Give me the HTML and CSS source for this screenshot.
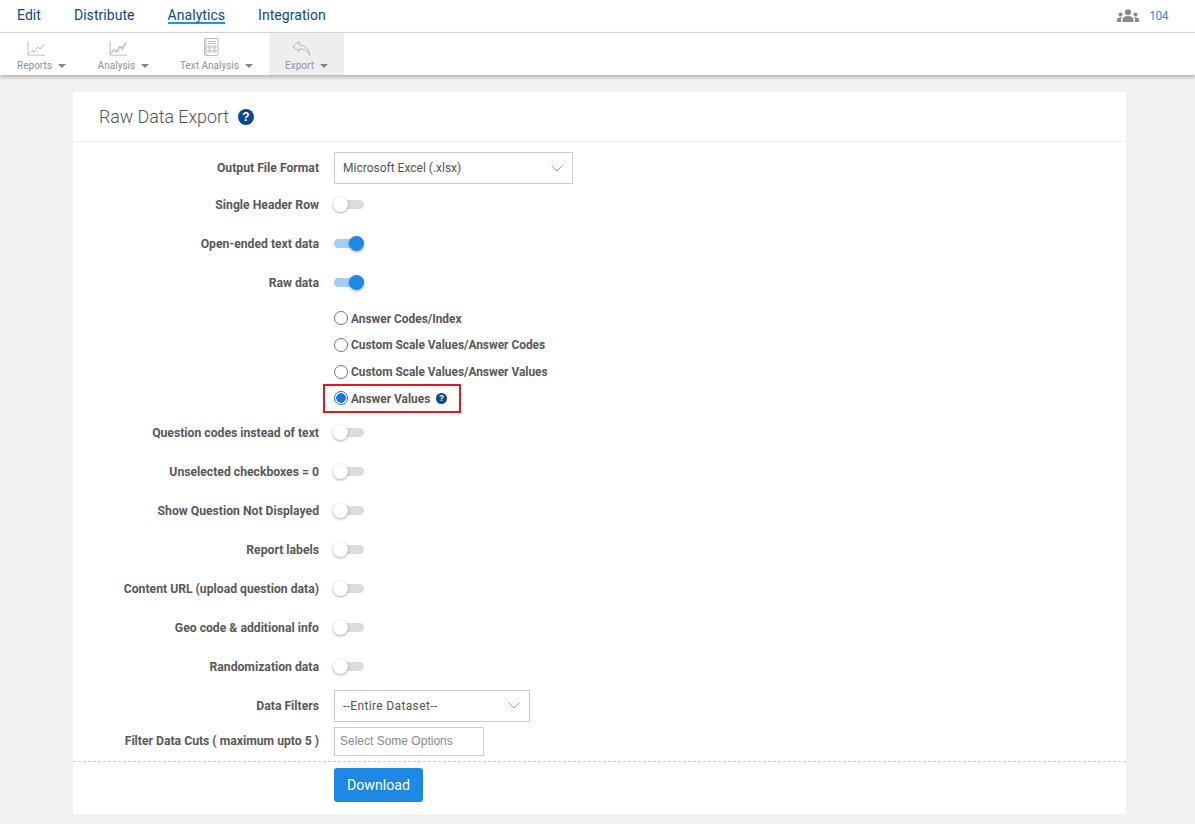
FILE: index.html
```html
<!DOCTYPE html>
<html lang="en">
<head>
<meta charset="utf-8">
<title>Raw Data Export</title>
<link rel="stylesheet" href="styles.css">
</head>
<body>
<header class="topnav">
  <nav class="tabs">
    <a class="tab">Edit</a>
    <a class="tab">Distribute</a>
    <a class="tab active">Analytics</a>
    <a class="tab">Integration</a>
  </nav>
  <div class="users">
    <svg class="users-icon" viewBox="0 0 24 14" width="22" height="13"><circle cx="12" cy="3.5" r="3.300"/><circle cx="3.800" cy="6" r="2.200"/><circle cx="20.200" cy="6" r="2.200"/><path d="M6 14v-2.500C6 9 8.500 7.600 12 7.600s6 1.400 6 3.900V14zM0 14v-2c0-2 1.500-3 3.800-3 .6 0 1 .1 1.300.2-.5.700-.7 1.500-.7 2.300V14zM24 14v-2c0-2-1.500-3-3.800-3-.6 0-1 .1-1.300.2.500.7.700 1.500.7 2.300V14z"/></svg>
    <span class="users-count">104</span>
  </div>
</header>
<div class="toolbar">
  <div class="tool tool-reports">
    <svg class="tool-icon" viewBox="0 0 18 15" width="18" height="15"><path d="M1 0v14"/><path d="M1 13.500l4-4 2 1.500 4-5 2 2 4-5"/><path class="soft" d="M1 14.300h17"/></svg>
    <span class="tool-label">Reports<i class="caret"></i></span>
  </div>
  <div class="tool tool-analysis">
    <svg class="tool-icon" viewBox="0 0 18 15" width="18" height="15"><path d="M1 0v14"/><path d="M1 13l4-5 3 2 3-5 2 2 4-6"/><path d="M2 12l3-2 3 1 3-6 2 4 4-6"/><path class="soft" d="M1 14.300h17"/></svg>
    <span class="tool-label">Analysis<i class="caret"></i></span>
  </div>
  <div class="tool tool-text">
    <svg class="tool-icon" viewBox="0 0 16 18" width="16" height="18"><path d="M3 .5h12v15.500c0 1-.6 1.500-1.500 1.500H3z"/><path d="M3 .5c-1 0-1.500.5-1.500 1.500v14c0 1 .6 1.500 1.500 1.500"/><path d="M5 3.500h8M5 5.500h8M5 8h3v2H5zM10 8h3v2h-3zM5 12h3v2H5zM10 12h3v2h-3z"/></svg>
    <span class="tool-label">Text Analysis<i class="caret"></i></span>
  </div>
  <div class="tool tool-export">
    <svg class="tool-icon" viewBox="0 0 18 15" width="18" height="15"><path d="M7 .5L.8 5.500 7 10.500V7.800c5 0 8.500 1.500 10.500 6.500-.5-6.500-4-10-10.500-10.500z"/></svg>
    <span class="tool-label">Export<i class="caret"></i></span>
  </div>
</div>
<main class="page">
  <section class="card">
    <div class="card-head">
      <h1 class="title">Raw Data Export</h1>
      <svg class="help help-lg" viewBox="0 0 16 16" width="16" height="16"><circle cx="8" cy="8" r="8"/><text x="8" y="12.200" text-anchor="middle">?</text></svg>
    </div>
    <form class="form">
      <div class="row row-select">
        <label class="label">Output File Format</label>
        <div class="select select-wide">Microsoft Excel (.xlsx)<svg class="chev" viewBox="0 0 12 7" width="12" height="7"><path d="M.5.500l5.500 5.500 5.500-5.500"/></svg></div>
      </div>
      <div class="row row-switch"><label class="label">Single Header Row</label><span class="switch"><i class="knob"></i></span></div>
      <div class="row row-switch"><label class="label">Open-ended text data</label><span class="switch on"><i class="knob"></i></span></div>
      <div class="row row-switch"><label class="label">Raw data</label><span class="switch on"><i class="knob"></i></span></div>
      <div class="radios">
        <div class="radio-row"><span class="radio"></span><span class="radio-text">Answer Codes/Index</span></div>
        <div class="radio-row"><span class="radio"></span><span class="radio-text">Custom Scale Values/Answer Codes</span></div>
        <div class="radio-row"><span class="radio"></span><span class="radio-text">Custom Scale Values/Answer Values</span></div>
        <div class="radio-row radio-highlight"><span class="radio checked"></span><span class="radio-text">Answer Values</span>
          <svg class="help help-sm" viewBox="0 0 16 16" width="11" height="11"><circle cx="8" cy="8" r="8"/><text x="8" y="12.200" text-anchor="middle">?</text></svg>
        </div>
      </div>
      <div class="row row-switch"><label class="label">Question codes instead of text</label><span class="switch"><i class="knob"></i></span></div>
      <div class="row row-switch"><label class="label">Unselected checkboxes = 0</label><span class="switch"><i class="knob"></i></span></div>
      <div class="row row-switch"><label class="label">Show Question Not Displayed</label><span class="switch"><i class="knob"></i></span></div>
      <div class="row row-switch"><label class="label">Report labels</label><span class="switch"><i class="knob"></i></span></div>
      <div class="row row-switch"><label class="label">Content URL (upload question data)</label><span class="switch"><i class="knob"></i></span></div>
      <div class="row row-switch"><label class="label">Geo code &amp; additional info</label><span class="switch"><i class="knob"></i></span></div>
      <div class="row row-switch"><label class="label">Randomization data</label><span class="switch"><i class="knob"></i></span></div>
      <div class="row row-filter">
        <label class="label">Data Filters</label>
        <div class="select select-mid">--Entire Dataset--<svg class="chev" viewBox="0 0 12 7" width="12" height="7"><path d="M.5.500l5.500 5.500 5.500-5.500"/></svg></div>
      </div>
      <div class="row row-cuts">
        <label class="label">Filter Data Cuts ( maximum upto 5 )</label>
        <div class="multi">Select Some Options</div>
      </div>
      <div class="actions">
        <button type="button" class="download">Download</button>
      </div>
    </form>
  </section>
</main>
</body>
</html>
```

FILE: styles.css
```css
*, *::before, *::after { box-sizing: border-box; }
html, body { margin: 0; height: 100%; }
body {
  background: #f1f1f1;
  font-family: Roboto, "Noto Sans", sans-serif;
  color: #555;
  overflow: hidden;
}
.topnav {
  height: 33px;
  background: #fff;
  border-bottom: 1px solid #d9d9d9;
  display: flex;
  align-items: center;
  justify-content: space-between;
  padding: 0 27px 0 17px;
}
.tabs { display: flex; gap: 33px; align-self: flex-start; padding-top: 6px; }
.tab {
  font-size: 14px;
  line-height: 18px;
  height: 18px;
  color: #0c4a8c;
  letter-spacing: .05px;
}
.tab.active { border-bottom: 2px solid #1a9bd8; }
.users { display: flex; align-items: center; gap: 10px; }
.users-icon { fill: #8a8a8a; margin-top: -1px; }
.users-count { font-size: 12px; color: #2a8fe6; letter-spacing: -.5px; }
.toolbar {
  height: 42px;
  background: #fff;
  box-shadow: 0 2px 4px rgba(0,0,0,.28);
  display: flex;
  position: relative;
}
.tool {
  display: flex;
  flex-direction: column;
  align-items: center;
  justify-content: flex-end;
  padding-bottom: 2px;
}
.tool-reports { width: 83px; }
.tool-analysis { width: 81px; }
.tool-text { width: 105px; }
.tool-export { width: 75px; background: #eeeeee; }
.tool-icon { fill: none; stroke: #a9a9ae; stroke-width: .8; margin: 0 12px 3px 0; }
.tool-icon .soft { stroke: #d5d5d5; stroke-width: 1.500; }
.tool-label { font-size: 10px; line-height: 14px; color: #8d93a3; white-space: nowrap; }
.caret {
  display: inline-block;
  width: 0; height: 0;
  margin-left: 6px;
  vertical-align: 1px;
  border-left: 4px solid transparent;
  border-right: 4px solid transparent;
  border-top: 4px solid #85858f;
}
.page { padding: 17px 69px 0 73px; }
.card { background: #fff; height: 722px; }
.card-head {
  height: 50px;
  border-bottom: 1px solid #efefef;
  display: flex;
  align-items: center;
  padding: 0 26px;
  gap: 9px;
}
.title { margin: 0; font-size: 17.800px; font-weight: 300; color: #50545a; }
.help circle { fill: #0b4a8f; }
.help text { fill: #fff; font-size: 12px; font-weight: 700; font-family: "Liberation Sans", sans-serif; }
.form { padding-top: 10px; }
.row {
  display: grid;
  grid-template-columns: 246px 1fr;
  column-gap: 15px;
  align-items: center;
}
.label {
  font-size: 12.200px;
  font-weight: 700;
  color: #595959;
  text-align: right;
  white-space: nowrap;
}
.row-select { height: 32px; }
.row-switch { height: 39px; padding-top: 1px; }
.row-switch .label { padding-top: 1px; }
.select {
  height: 32px;
  border: 1px solid #ccc;
  background: #fff;
  font-size: 12px;
  color: #555;
  display: flex;
  align-items: center;
  justify-content: space-between;
  padding: 0 9px 0 8px;
}
.select-wide { width: 239px; }
.select-mid { width: 196px; letter-spacing: .35px; }
.chev { fill: none; stroke: #9aa3ad; stroke-width: 1; }
.switch {
  display: block;
  width: 30px;
  height: 9px;
  border-radius: 5px;
  background: #dcdcdc;
  position: relative;
}
.switch.on { background: #a3cef5; }
.knob {
  position: absolute;
  left: -1px;
  top: -3px;
  width: 15px;
  height: 15px;
  border-radius: 50%;
  background: #fff;
  box-shadow: 0 1px 3px rgba(0,0,0,.35);
}
.switch.on .knob { left: auto; right: 0; background: #1e88e5; }
.radios {
  padding: 4px 0 1px 261px;
  display: flex;
  flex-direction: column;
}
.radio-row {
  height: 26.650px;
  display: flex;
  align-items: center;
  gap: 3px;
  font-size: 11.900px;
  font-weight: 700;
  color: #595959;
}
.radio-text { padding-top: 1px; }
.radio-highlight { position: relative; }
.radio-highlight::before {
  content: "";
  position: absolute;
  left: -11px;
  top: -1px;
  width: 138px;
  height: 29px;
  border: 2px solid #e8141f;
}
.radio {
  width: 14px;
  height: 14px;
  border-radius: 50%;
  border: 1px solid #767676;
  background: #fff;
  flex: none;
}
.radio.checked {
  border-color: #1a73e8;
  background: radial-gradient(circle, #1a73e8 0, #1a73e8 4.500px, #fff 5px);
}
.help-sm { margin-left: 3px; }
.row-filter { height: 32px; margin-top: 4px; }
.row-cuts { height: 29px; margin-top: 5px; }
.multi {
  width: 150px;
  height: 29px;
  border: 1px solid #ccc;
  font-family: "Liberation Sans", sans-serif;
  font-size: 12px;
  color: #8b8b8b;
  display: flex;
  align-items: center;
  padding-left: 5px;
}
.actions {
  margin-top: 5px;
  border-top: 1px dashed #cfcfcf;
  padding: 6px 0 0 261px;
}
.download {
  width: 89px;
  height: 34px;
  border: 0;
  border-radius: 3px;
  background: #1e88e5;
  color: #fff;
  font-family: inherit;
  font-size: 14.200px;
}
```
